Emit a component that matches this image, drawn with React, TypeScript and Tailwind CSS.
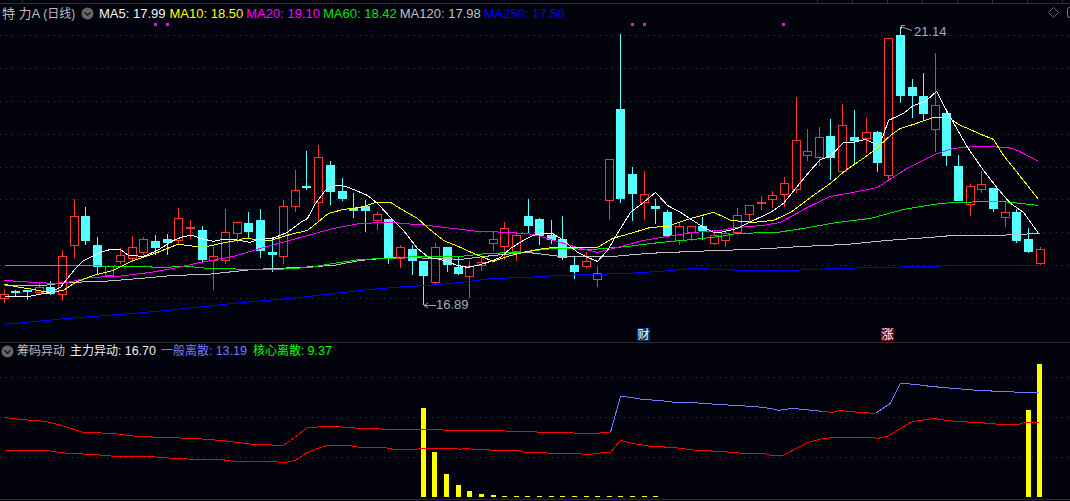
import React from "react";

type C = [number, number, number, number, number, "r" | "c"];
const candles: C[] = [
  [4, 289, 294, 298, 303, "r"], [15, 290, 291, 293, 296, "c"], [27, 290, 290, 291, 300, "c"], [39, 283, 287, 292, 295, "r"],
  [50, 281, 287, 294, 295, "c"], [62, 250, 256, 294, 301, "r"], [74, 199, 216, 245, 258, "r"], [85, 207, 216, 241, 245, "c"],
  [97, 237, 245, 267, 274, "c"], [109, 266, 266, 275, 275, "r"], [120, 248, 255, 261, 264, "r"], [132, 236, 247, 258, 262, "r"],
  [143, 237, 239, 252, 255, "r"], [155, 235, 241, 248, 255, "c"], [167, 234, 239, 243, 255, "c"], [178, 208, 218, 240, 244, "r"],
  [190, 220, 227, 229, 239, "r"], [202, 226, 230, 260, 262, "c"], [213, 247, 256, 260, 290, "r"], [225, 209, 232, 260, 264, "r"],
  [237, 222, 222, 233, 243, "r"], [248, 212, 223, 232, 238, "c"], [260, 209, 220, 251, 258, "c"], [272, 237, 252, 255, 272, "c"],
  [283, 200, 206, 256, 264, "r"], [295, 170, 190, 206, 212, "r"], [306, 151, 186, 187, 190, "c"], [318, 145, 157, 202, 222, "r"],
  [330, 161, 165, 192, 205, "c"], [342, 178, 191, 199, 201, "c"], [353, 193, 208, 211, 218, "c"], [365, 200, 206, 211, 232, "c"],
  [377, 212, 214, 220, 230, "r"], [388, 219, 219, 258, 264, "c"], [400, 245, 247, 258, 268, "r"], [412, 245, 249, 261, 275, "c"],
  [423, 261, 261, 276, 305, "c"], [435, 243, 247, 282, 285, "r"], [447, 247, 247, 265, 272, "c"], [458, 256, 267, 274, 275, "c"],
  [469, 261, 266, 276, 298, "r"], [481, 256, 262, 265, 271, "r"], [493, 232, 239, 243, 251, "r"], [504, 222, 228, 246, 260, "r"],
  [516, 232, 235, 251, 261, "r"], [528, 199, 216, 226, 233, "c"], [539, 218, 219, 236, 245, "c"], [551, 220, 235, 240, 244, "c"],
  [562, 216, 239, 258, 260, "c"], [574, 257, 265, 272, 279, "c"], [586, 252, 261, 266, 268, "r"], [597, 266, 273, 279, 287, "r"],
  [609, 159, 159, 200, 220, "r"], [620, 34, 109, 199, 203, "c"], [632, 167, 174, 194, 221, "c"], [644, 171, 194, 202, 220, "r"],
  [655, 199, 206, 209, 224, "c"], [667, 210, 212, 236, 236, "c"], [679, 222, 226, 240, 245, "r"], [691, 226, 226, 232, 241, "r"],
  [702, 217, 226, 231, 240, "c"], [714, 231, 235, 243, 245, "r"], [725, 231, 233, 240, 247, "r"], [737, 208, 215, 232, 235, "r"],
  [749, 205, 205, 214, 222, "r"], [761, 196, 202, 203, 210, "r"], [772, 191, 195, 199, 208, "r"], [784, 177, 183, 194, 207, "r"],
  [796, 97, 140, 189, 193, "r"], [807, 129, 151, 155, 161, "r"], [819, 127, 137, 157, 166, "r"], [830, 119, 136, 158, 180, "c"],
  [842, 104, 125, 171, 172, "r"], [854, 110, 137, 141, 165, "c"], [866, 118, 132, 138, 153, "r"], [877, 131, 132, 163, 172, "c"],
  [888, 38, 38, 175, 180, "r"], [900, 27, 35, 96, 103, "c"], [912, 79, 87, 96, 118, "c"], [923, 73, 96, 114, 120, "c"],
  [935, 53, 105, 129, 152, "r"], [946, 109, 113, 156, 166, "c"], [958, 155, 166, 201, 201, "c"], [970, 184, 186, 204, 216, "r"],
  [981, 171, 184, 189, 193, "r"], [993, 188, 188, 209, 212, "c"], [1005, 202, 212, 217, 227, "r"], [1016, 209, 212, 241, 243, "c"],
  [1028, 228, 239, 252, 253, "c"], [1040, 247, 249, 263, 265, "r"],
];

const ma5 = "4,296 29,296 33,295 50,292 60,287 67,278 75,268 82,261 90,257 100,252 110,249 120,249 128,255 143,256 157,250 173,240 183,236 192,235 200,238 213,241 223,239 233,239 250,242 257,239 272,238 287,232 300,222 307,218 315,203 325,190 330,186 340,185 348,187 360,192 367,195 377,203 390,217 403,230 417,248 428,257 440,259 457,265 467,267 477,265 487,262 500,257 510,248 523,240 533,235 543,233 552,233 563,240 577,252 587,257 597,261 607,250 617,233 630,212 643,202 655,192 667,205 680,212 700,225 713,232 720,232 737,228 753,220 770,212 783,203 800,182 810,170 820,159 830,156 843,142 853,142 865,139 875,144 882,137 888,120 903,113 913,105 925,101 936,91 947,112 967,147 983,170 997,188 1010,203 1023,212 1038,233";
const ma10 = "4,284 20,287 33,289 47,292 63,290 75,282 93,275 113,270 133,260 157,252 177,244 187,245 203,247 220,243 237,240 243,238 257,239 270,240 290,234 307,230 317,222 328,213 343,209 360,207 375,202 390,202 403,210 417,218 428,228 443,240 460,247 473,253 493,261 507,256 523,252 537,249 553,247 573,247 597,247 612,238 630,233 650,227 667,226 690,218 713,212 720,215 730,220 753,222 773,220 790,212 810,197 830,183 845,170 867,155 877,147 890,135 900,128 913,124 933,117 948,117 958,124 983,135 993,139 1003,155 1015,170 1038,199";
const ma20 = "4,280 33,282 53,283 67,282 90,277 117,276 150,272 173,268 200,262 233,256 260,248 293,239 333,228 360,223 390,222 427,225 477,231 510,232 533,234 560,242 580,248 597,252 617,247 643,240 667,236 693,232 720,230 737,227 763,225 780,222 807,207 830,196 853,192 877,187 905,169 937,153 953,148 977,146 1007,147 1017,150 1038,161";
const ma60 = "4,265 57,265 90,265 107,266 137,266 160,267 187,266 207,268 253,269 277,269 310,267 333,263 360,259 390,258 417,256 460,256 487,253 520,252 553,248 593,249 627,246 660,242 693,239 720,236 737,233 777,232 803,228 837,222 870,218 903,209 933,204 953,202 1000,201 1020,203 1038,205";
const ma120 = "4,285 43,285 67,282 103,281 140,278 173,275 207,274 253,269 300,267 333,265 360,260 393,257 440,258 460,259 493,255 527,252 560,256 613,256 647,253 693,251 720,250 753,249 803,246 847,244 887,240 930,237 953,235 997,235 1040,233";
const ma250 = "4,324 67,318 133,313 167,310 233,303 300,297 360,290 393,287 427,285 460,282 493,278 527,277 560,275 627,273 660,271 693,268 720,269 743,270 790,270 837,268 883,267 930,266 953,265";

const red1a = "4,417 20,419 45,421 57,424 83,432 113,433 137,436 160,437 193,438 220,440 253,444 283,445 293,438 307,427 333,426 360,428 393,429 475,430 523,431 545,432 592,433 610,432";
const blue1a = "610,432 620,396 630,397 642,399 658,400 675,402 697,402 698,403 720,404 732,405 753,406 770,408 778,410 792,408 802,409 813,410 822,411";
const red1b = "822,411 832,412 840,410 848,411 860,412 875,413";
const blue1b = "875,413 887,405 890,403 900,383 915,384 930,386 953,388 977,390 1000,391 1023,392 1038,392";
const red2 = "4,450 45,450 67,453 92,454 115,456 148,456 173,458 197,459 220,459 233,461 267,461 285,462 295,460 305,453 317,448 327,445 348,445 360,447 383,447 393,449 417,449 418,448 453,448 460,449 463,448 475,449 498,450 518,450 525,452 545,452 547,453 580,453 582,454 592,454 593,453 610,452 620,440 632,443 650,446 673,447 697,450 720,451 732,452 743,453 763,453 770,455 783,455 807,442 823,438 837,437 870,437 877,438 887,436 910,422 920,420 933,418 953,421 977,422 1000,424 1018,424 1025,422 1038,422";

const ticks = [22, 817, 852, 887, 922, 957, 992, 1027, 1062];
const topGrid = [35, 68, 101, 134, 167, 199, 232, 265, 298];
const lowGrid = [377, 417, 457];
const bars: [number, number][] = [[421, 408], [432, 452], [444, 474], [456, 485], [467, 491], [479, 494], [491, 495], [1026, 410], [1037, 364]];
const dashes = [502, 514, 525, 537, 549, 560, 572, 584, 595, 607, 618, 630, 642, 653];
const pink = [154, 166, 631, 643, 782];

function Candle({ c }: { c: C }) {
  const [x, h, t, b, l, k] = c;
  if (k === "c") {
    return (
      <g fill="#54ffff">
        <rect x={x} y={h} width={1} height={l - h} />
        <rect x={x - 4} y={t} width={9} height={Math.max(b - t, 2)} />
      </g>
    );
  }
  const flat = b - t <= 2;
  return (
    <g fill="#ff3232">
      <rect x={x} y={h} width={1} height={t - h} />
      <rect x={x} y={b} width={1} height={l - b} />
      {flat ? (
        <rect x={x - 4} y={t} width={9} height={2} />
      ) : (
        <rect x={x - 3.5} y={t + 0.5} width={8} height={b - t} fill="none" stroke="#ff3232" strokeWidth={1} />
      )}
    </g>
  );
}

function Line({ p, c }: { p: string; c: string }) {
  return (
    <polyline
      points={p}
      fill="none"
      stroke={c}
      strokeWidth={1}
      shapeRendering="crispEdges"
      transform="translate(0.5 0.4)"
    />
  );
}

function Chevron() {
  return (
    <svg width="13" height="13" viewBox="0 0 13 13" className="block shrink-0">
      <circle cx="6.5" cy="6.5" r="6" fill="#666666" />
      <path d="M3.5 5.2 L6.5 8.2 L9.5 5.2" fill="none" stroke="#1a1a1a" strokeWidth="1.4" />
    </svg>
  );
}

function Val({ name, value, color }: { name: string; value: string; color: string }) {
  return (
    <span style={{ color }} className="whitespace-nowrap">
      {name}: {value}
    </span>
  );
}

export default function App() {
  return (
    <div className="w-[1070px] h-[501px] overflow-hidden bg-[#03030d] font-['Liberation_Sans','Noto_Sans_CJK_SC',sans-serif] text-[13px] leading-none">
      <svg width="1070" height="4" className="block">
        <rect x="0" y="3" width="1070" height="1" fill="#2e2e2e" />
        {ticks.map((x) => (
          <rect key={x} x={x} y="0" width="1" height="3" fill="#2e2e2e" />
        ))}
      </svg>

      <div className="flex h-[18px] items-center pl-[2px]">
        <span className="w-[79px] shrink-0 whitespace-nowrap text-[#bcbcbc] text-[13px]">
          特 力A <span className="text-[12px]">(日线)</span>
        </span>
        <Chevron />
        <div className="ml-[5px] flex gap-[3px]">
          <span className="mr-[1px]">
            <Val name="MA5" value="17.99" color="#f4f4f4" />
          </span>
          <Val name="MA10" value="18.50" color="#ffff00" />
          <Val name="MA20" value="19.10" color="#ff00ff" />
          <Val name="MA60" value="18.42" color="#00e600" />
          <Val name="MA120" value="17.98" color="#c0c0c0" />
          <Val name="MA250" value="17.50" color="#0000ff" />
        </div>
        <svg width="22" height="14" viewBox="0 0 22 14" className="ml-auto block shrink-0">
          <path d="M5.5 1.5 L10.5 6.5 L5.5 11.5 L0.5 6.5 Z" fill="none" stroke="#666666" />
          <rect x="19.5" y="1.5" width="6" height="10" rx="2" fill="none" stroke="#808080" />
        </svg>
      </div>

      <div className="relative h-[320px]">
        <svg viewBox="0 22 1070 320" width="1070" height="320" className="block">
          {topGrid.map((y) => (
            <line key={y} x1="0" x2="1070" y1={y + 0.5} y2={y + 0.5} stroke="#3c3c3c" strokeDasharray="1 5" />
          ))}
          {pink.map((x) => (
            <rect key={x} x={x} y="23" width="3" height="3" fill="#ff00ff" />
          ))}
          {candles.map((c) => (
            <Candle key={c[0]} c={c} />
          ))}
          <Line p={ma250} c="#0000ff" />
          <rect x="953" y="265" width="85" height="1" fill="#0000ff" />
          <Line p={ma120} c="#c0c0c0" />
          <Line p={ma60} c="#00e600" />
          <Line p={ma20} c="#ff00ff" />
          <Line p={ma10} c="#ffff00" />
          <Line p={ma5} c="#ffffff" />
          <path d="M424 305.5 H436 M424 305.5 L428 303 M424 305.5 L428 308" fill="none" stroke="#a0a0a0" />
          <path d="M901.5 25 V29 M901.5 25.5 H905 M902 27 L912 30.5" fill="none" stroke="#a0a0a0" />
        </svg>
        <span className="absolute left-[436px] top-[276px] text-[#a4acbc]">16.89</span>
        <span className="absolute left-[914px] top-[3px] text-[#a4acbc]">21.14</span>
        <span className="absolute left-[637px] top-[306px] flex h-[13px] w-[13px] items-center justify-center bg-[#0a3560] text-[12px] text-white">财</span>
        <span className="absolute left-[881px] top-[306px] flex h-[13px] w-[13px] items-center justify-center bg-[#7a0808] text-[12px] text-white">涨</span>
      </div>

      <div className="h-[1px] bg-[#2e2e2e]" />

      <div className="flex h-[16px] items-center pl-[1px] text-[12px]">
        <Chevron />
        <span className="ml-[3px] whitespace-nowrap text-[#bcbcbc]">筹码异动</span>
        <span className="ml-[5px] whitespace-nowrap text-[#f0f0f0]">
          主力异动: <span className="text-[12.5px]">16.70</span>
        </span>
        <span className="ml-[5px] whitespace-nowrap text-[#7878ff]">
          一般离散: <span className="text-[12.5px]">13.19</span>
        </span>
        <span className="ml-[6px] whitespace-nowrap text-[#00ff00]">
          核心离散: <span className="text-[12.5px]">9.37</span>
        </span>
      </div>

      <svg viewBox="0 359 1070 140" width="1070" height="140" className="block">
        {lowGrid.map((y) => (
          <line key={y} x1="0" x2="1070" y1={y + 0.5} y2={y + 0.5} stroke="#3c3c3c" strokeDasharray="1 5" />
        ))}
        {bars.map(([x, y]) => (
          <rect key={x} x={x} y={y} width={5} height={497 - y} fill="#ffff00" />
        ))}
        {dashes.map((x) => (
          <rect key={x} x={x} y={496} width={5} height={1} fill="#ffff00" />
        ))}
        <Line p={blue1a} c="#7878ff" />
        <Line p={blue1b} c="#7878ff" />
        <Line p={red1a} c="#ff0000" />
        <Line p={red1b} c="#ff0000" />
        <Line p={red2} c="#ff0000" />
      </svg>

      <div className="h-[1px] bg-[#2e2e2e]" />
    </div>
  );
}
